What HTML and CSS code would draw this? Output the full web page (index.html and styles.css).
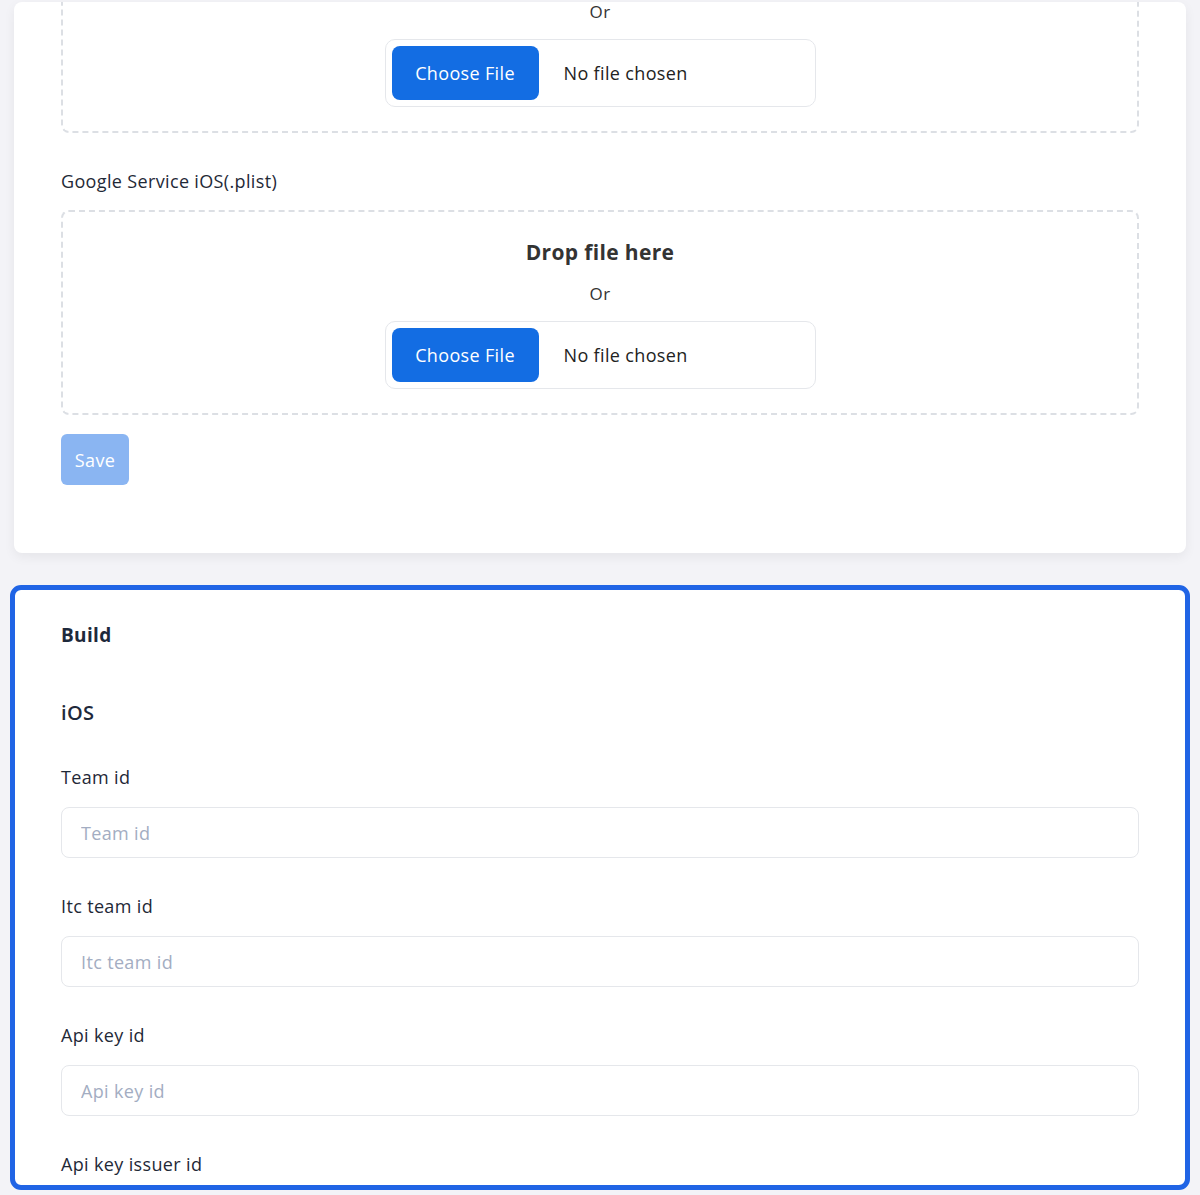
FILE: index.html
```html
<!DOCTYPE html>
<html>
<head>
<meta charset="utf-8">
<link rel="stylesheet" href="styles.css">
</head>
<body>
<div class="page">
  <section class="card card-top">
    <div class="dropzone dropzone-cut">
      <div class="or">Or</div>
      <div class="file-input">
        <span class="file-btn">Choose File</span>
        <span class="file-name">No file chosen</span>
      </div>
    </div>
    <label class="label label-plist">Google Service iOS(.plist)</label>
    <div class="dropzone">
      <div class="drop-title">Drop file here</div>
      <div class="or">Or</div>
      <div class="file-input">
        <span class="file-btn">Choose File</span>
        <span class="file-name">No file chosen</span>
      </div>
    </div>
    <button class="save" disabled>Save</button>
  </section>

  <section class="card card-build">
    <h2 class="title">Build</h2>
    <h3 class="subtitle">iOS</h3>
    <div class="field">
      <label class="label">Team id</label>
      <input class="input" placeholder="Team id">
    </div>
    <div class="field">
      <label class="label">Itc team id</label>
      <input class="input" placeholder="Itc team id">
    </div>
    <div class="field">
      <label class="label">Api key id</label>
      <input class="input" placeholder="Api key id">
    </div>
    <div class="field">
      <label class="label">Api key issuer id</label>
    </div>
  </section>
</div>
</body>
</html>
```
FILE: styles.css
```css
* { box-sizing: border-box; }
html, body {
  margin: 0;
  padding: 0;
  height: 1195px;
  overflow: hidden;
}
body {
  background: #f3f3f7;
  font-family: "Open Sans", "Liberation Sans", sans-serif;
  color: #1f2937;
  letter-spacing: 0.35px;
}
.page {
  padding: 2px 10px 0 14px;
  display: flex;
  flex-direction: column;
}
.card {
  background: #fff;
  border-radius: 8px;
  width: 1172px;
}
.card-top {
  overflow: hidden;
  padding: 0 47px 68px 47px;
  box-shadow: 0 4px 12px rgba(0, 0, 0, 0.06);
  display: flex;
  flex-direction: column;
  align-items: flex-start;
}
.dropzone {
  width: 100%;
  border: 2px dashed #dcdfe4;
  border-radius: 8px;
  display: flex;
  flex-direction: column;
  align-items: center;
  padding: 28px 0 24px;
}
.dropzone-cut {
  margin-top: -64px;
  padding-top: 61px;
}
.drop-title {
  font-size: 21px;
  font-weight: 700;
  color: #333;
  line-height: 26px;
  margin-top: -1px;
}
.or {
  font-size: 17px;
  color: #333;
  line-height: 22px;
  margin-top: 18px;
}
.dropzone-cut .or { margin-top: 0; }
.file-input {
  margin-top: 16px;
  width: 431px;
  height: 68px;
  border: 1px solid #e5e7eb;
  border-radius: 10px;
  display: flex;
  align-items: center;
  padding: 0 6px;
}
.file-btn {
  background: #136de3;
  color: #fff;
  width: 147px;
  height: 54px;
  border-radius: 8px;
  display: flex;
  align-items: center;
  justify-content: center;
  font-size: 18px;
}
.file-name {
  margin-left: 25px;
  font-size: 18px;
  color: #222;
}
.label {
  display: block;
  font-size: 18px;
  line-height: 24px;
  color: #1f2937;
}
.label-plist {
  margin: 36px 0 17px;
}
.save {
  margin-top: 19px;
  width: 68px;
  height: 51px;
  border: none;
  border-radius: 6px;
  background: #8ab5f2;
  color: #fff;
  font-family: inherit;
  font-size: 18px;
  letter-spacing: 0.35px;
  padding: 0;
}
.card-build {
  margin-top: 36px;
  height: 597px;
  border-radius: 7px;
  outline: 5px solid #2064e5;
  outline-offset: -1px;
  padding: 32px 47px 0;
}
.title {
  margin: 0;
  font-size: 19px;
  font-weight: 700;
  line-height: 28px;
  color: #1e293b;
}
.subtitle {
  margin: 50px 0 0;
  font-size: 20px;
  font-weight: 600;
  line-height: 28px;
  color: #1e293b;
}
.field {
  margin-top: 38px;
}
.field + .field { margin-top: 36px; }
.field .label { margin-bottom: 18px; }
.input {
  display: block;
  width: 100%;
  height: 51px;
  border: 1px solid #e5e7eb;
  border-radius: 8px;
  padding: 0 19px;
  font-family: inherit;
  font-size: 18px;
  letter-spacing: 0.35px;
  color: #1f2937;
  background: #fff;
}
.input::placeholder { color: #a3adc2; }
```
